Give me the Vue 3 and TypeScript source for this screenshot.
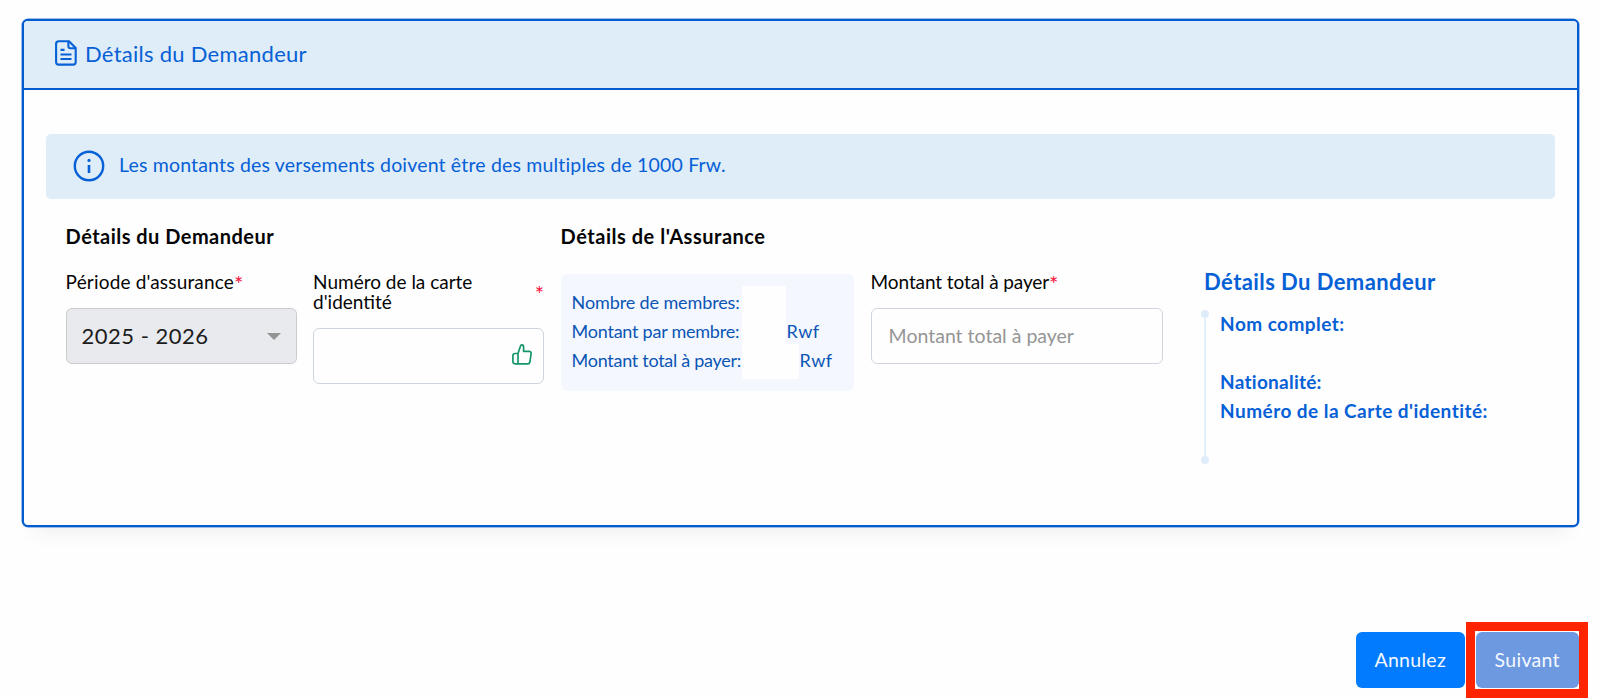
<script setup lang="ts">
import { ref } from 'vue'

interface SummaryLine {
  label: string
  unit?: string
  size: 'short' | 'medium' | 'long'
}

const period = ref('2025 - 2026')
const identity = ref('')
const amount = ref('')

const summary: SummaryLine[] = [
  { label: 'Nombre de membres:', size: 'short' },
  { label: 'Montant par membre:', unit: 'Rwf', size: 'medium' },
  { label: 'Montant total à payer:', unit: 'Rwf', size: 'long' },
]
</script>

<template>
  <div class="page">
    <section class="card">
      <header class="card-header">
        <svg class="doc-icon" viewBox="0 0 22 26" fill="none" stroke="currentColor" stroke-width="2.1" stroke-linejoin="round">
          <path d="M3.7 1.2H14L20.7 8V22a2.6 2.6 0 0 1-2.6 2.6H3.7A2.6 2.6 0 0 1 1.1 22V3.8A2.6 2.6 0 0 1 3.7 1.2Z" />
          <path d="M13.4 1.5V6.6a1.7 1.7 0 0 0 1.7 1.7h5.2" />
          <path d="M5.5 9.9h4M5.5 14.5h11M5.5 19h11" />
        </svg>
        <h1>Détails du Demandeur</h1>
      </header>

      <div class="card-body">
        <div class="notice">
          <svg class="info-icon" viewBox="0 0 32 32" fill="none" stroke="currentColor">
            <circle cx="16" cy="16" r="14.2" stroke-width="2.4" />
            <path d="M16 15v8" stroke-width="2.6" />
            <circle cx="16" cy="10.4" r="1.6" fill="currentColor" stroke="none" />
          </svg>
          <p>Les montants des versements doivent être des multiples de 1000 Frw.</p>
        </div>

        <div class="columns">
          <div class="applicant">
            <h2>Détails du Demandeur</h2>
            <div class="fields">
              <div class="field">
                <div class="label"><span class="period-label">Période d'assurance</span><span class="star">*</span></div>
                <div class="control select">
                  <span>{{ period }}</span>
                  <svg class="caret" viewBox="0 0 14 7"><path d="M0 0h14L7 7Z" fill="#949494" /></svg>
                </div>
              </div>
              <div class="field">
                <div class="label split"><span>Numéro de la carte<br />d'identité</span><span class="star">*</span></div>
                <div class="control">
                  <input v-model="identity" type="text" />
                  <svg class="thumb" viewBox="0 0 20 21" fill="none" stroke="#16966a" stroke-width="1.7" stroke-linejoin="round">
                    <path d="M6 19.8V9.5L8.3 2.4C8.6 1.3 9.2.9 9.9.9c1.2 0 1.7 1 1.7 2.4v4h5.6c1.4 0 2.1 1 1.9 2.3l-1.2 8.4c-.2 1.1-.9 1.8-2 1.8Z" />
                    <path d="M6 9.5H3C1.6 9.5.9 10.3.9 11.6v6c0 1.4.8 2.2 2.1 2.2h3" />
                  </svg>
                </div>
              </div>
            </div>
          </div>

          <div class="insurance">
            <h2 class="wide">Détails de l'Assurance</h2>
            <div class="summary">
              <div v-for="line in summary" :key="line.label" class="summary-line" :class="line.size">
                <span class="name">{{ line.label }}</span>
                <span class="value"></span>
                <span v-if="line.unit" class="unit">{{ line.unit }}</span>
              </div>
            </div>
          </div>

          <div class="payment">
            <div class="label"><span class="amount-label">Montant total à payer</span><span class="star">*</span></div>
            <div class="control">
              <input v-model="amount" type="text" placeholder="Montant total à payer" />
            </div>
          </div>

          <aside class="details">
            <h3>Détails Du Demandeur</h3>
            <div class="timeline">
              <p>Nom complet:</p>
              <p></p>
              <p class="nationality">Nationalité:</p>
              <p>Numéro de la Carte d'identité:</p>
            </div>
          </aside>
        </div>
      </div>
    </section>

    <footer class="actions">
      <button class="btn cancel" type="button">Annulez</button>
      <div class="highlight"><button class="btn next" type="button">Suivant</button></div>
    </footer>
  </div>
</template>

<style>
body {
  background: #fefefe;
}
</style>

<style scoped>
* {
  box-sizing: border-box;
}

h1, h2, h3, p {
  margin: 0;
}

.page {
  width: 1600px;
  height: 698px;
  padding: 18.5px 21px 0 22px;
  overflow: hidden;
  font-family: Lato, "Noto Sans", sans-serif;
}

.card {
  height: 508px;
  border: 2px solid #035bd0;
  border-radius: 6px;
  background: #fefefe;
  box-shadow: 0 0 0 0.5px #3c82dc, 0 16px 20px -12px rgba(0, 0, 0, 0.07);
}

.card-header {
  display: flex;
  align-items: center;
  height: 69px;
  padding: 0 0 0 31px;
  border-bottom: 2.5px solid #035bd0;
  border-radius: 4px 4px 0 0;
  background: #dfedf8;
  color: #0660d6;
}

.doc-icon {
  width: 22px;
  height: 26px;
  margin-top: -3px;
}

h1 {
  margin: -1px 0 0 8px;
  font-size: 22px;
  font-weight: 400;
  line-height: 28px;
  letter-spacing: 0.27px;
}

.card-body {
  padding: 44px 22px 0;
}

.notice {
  display: flex;
  align-items: center;
  height: 65px;
  padding-left: 26.5px;
  border-radius: 5px;
  background: #dfedf8;
  color: #0660d6;
}

.info-icon {
  width: 32px;
  height: 32px;
}

.notice p {
  margin: 0 0 3px 14.5px;
  font-size: 19.5px;
  line-height: 26px;
  letter-spacing: 0.17px;
}

.columns {
  display: grid;
  grid-template-columns: 478px 293px 292.5px 1fr;
  column-gap: 17px;
  padding: 27px 0 0 19.6px;
}

h2 {
  height: 20px;
  margin-bottom: 26px;
  color: #050505;
  font-size: 20px;
  font-weight: 700;
  line-height: 20px;
  letter-spacing: 0.47px;
  white-space: nowrap;
}

h2.wide {
  letter-spacing: 0.52px;
}

.fields {
  display: grid;
  grid-template-columns: 231px 231px;
  column-gap: 16.5px;
}

.label {
  display: flex;
  margin-bottom: 16px;
  color: #050505;
  font-size: 19px;
  line-height: 20px;
}

.label.split {
  justify-content: space-between;
  align-items: center;
}

.period-label {
  letter-spacing: 0.17px;
}

.amount-label {
  letter-spacing: -0.1px;
}

.star {
  height: 20px;
  color: #f5103c;
  font-size: 22px;
  line-height: 23px;
}

.control {
  display: flex;
  align-items: center;
  justify-content: space-between;
  height: 56px;
  padding: 0 11px 0 17px;
  border: 1px solid #cfd5dd;
  border-radius: 6px;
  background: #fefefe;
}

.control.select {
  padding: 0 15px;
  border-color: #cacbce;
  background: #e9eaee;
  color: #1c1c1c;
  font-size: 22px;
  letter-spacing: 0.5px;
}

.caret {
  width: 14px;
  height: 7px;
  margin-top: 1px;
}

.thumb {
  flex: none;
  width: 20px;
  height: 21px;
  margin-top: -3px;
}

input {
  width: 100%;
  min-width: 0;
  padding: 0;
  border: 0;
  outline: 0;
  background: transparent;
  font-family: inherit;
  font-size: 19.5px;
  line-height: 26px;
}

input::placeholder {
  color: #959595;
  opacity: 1;
}

.summary {
  height: 117px;
  margin-top: 28px;
  padding: 12px 11px 0;
  border-radius: 6px;
  background: #f4f8fe;
  color: #0b55b5;
  font-size: 18px;
  line-height: 33px;
}

.insurance h2 {
  margin-bottom: 0;
}

.summary-line {
  display: flex;
  height: 29px;
}

.name {
  width: 170px;
  white-space: nowrap;
  letter-spacing: -0.12px;
}

.medium .name {
  letter-spacing: -0.24px;
}

.long .name {
  letter-spacing: -0.28px;
}

.value {
  width: 44px;
  background: #fefefe;
}

.long .value {
  width: 57px;
  height: 35px;
}

.unit {
  margin-left: 1px;
  letter-spacing: 0.5px;
}

.payment {
  padding-top: 46px;
}

.details {
  padding: 47px 0 0 24px;
}

h3 {
  color: #0660d6;
  font-size: 22px;
  font-weight: 700;
  line-height: 18px;
  letter-spacing: 0.42px;
  white-space: nowrap;
}

.timeline {
  position: relative;
  display: flex;
  flex-direction: column;
  height: 146px;
  margin-top: 23px;
  padding-left: 14px;
  border-left: 2px solid #e3effb;
  color: #0660d6;
  font-size: 19px;
  font-weight: 700;
  line-height: 29px;
  letter-spacing: 0.45px;
  white-space: nowrap;
}

.timeline::before,
.timeline::after {
  content: "";
  position: absolute;
  left: -5px;
  width: 8px;
  height: 8px;
  border-radius: 50%;
  background: #dfedfb;
}

.timeline::before {
  top: -4px;
}

.timeline::after {
  bottom: -4px;
}

.timeline p {
  height: 29px;
}

.timeline p:first-child {
  margin-top: -5px;
}

.timeline .nationality {
  letter-spacing: 0.25px;
}

.actions {
  display: flex;
  justify-content: flex-end;
  align-items: center;
  margin: 95px -9px 0 0;
}

.btn {
  height: 56px;
  padding: 0 0 1px;
  border: 0;
  border-radius: 6px;
  color: #f4f8ff;
  font-family: inherit;
  font-size: 19.5px;
  letter-spacing: 0.3px;
}

.cancel {
  width: 109.5px;
  background: #027bff;
}

.highlight {
  margin-left: 1px;
  border: 9px solid #ff2400;
  padding: 1px 0 1px 0.5px;
}

.next {
  display: block;
  width: 103.5px;
  background: #6c99e0;
}
</style>
